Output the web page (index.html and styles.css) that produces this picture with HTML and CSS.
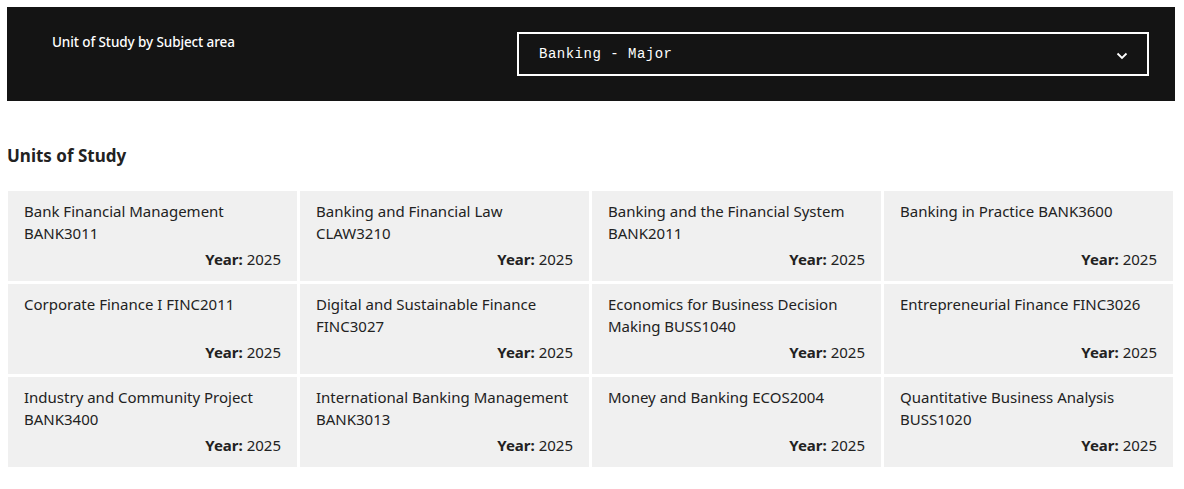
FILE: index.html
```html
<!DOCTYPE html>
<html lang="en">
  <head>
    <meta charset="UTF-8" />
    <meta name="viewport" content="width=device-width, initial-scale=1.0" />
    <title>Units of Study</title>
    <link rel="stylesheet" href="styles.css">
  </head>
  <body>
    <div class="filter-bar">
      <label class="filter-label" for="subject">Unit of Study by Subject area</label>
      <div class="select-box" id="subject">
        <span>Banking - Major</span>
        <svg class="chevron" width="12" height="8" viewBox="0 0 12 8">
          <path d="M1.5 1.5 L6 6 L10.5 1.5" fill="none" stroke="#fff" stroke-width="1.8" />
        </svg>
      </div>
    </div>

    <h2 class="section-title">Units of Study</h2>

    <div class="units">
      <div class="unit">
        <div class="unit-name">Bank Financial Management BANK3011</div>
        <div class="unit-year"><b>Year:</b> 2025</div>
      </div>
      <div class="unit">
        <div class="unit-name">Banking and Financial Law CLAW3210</div>
        <div class="unit-year"><b>Year:</b> 2025</div>
      </div>
      <div class="unit">
        <div class="unit-name">Banking and the Financial System BANK2011</div>
        <div class="unit-year"><b>Year:</b> 2025</div>
      </div>
      <div class="unit">
        <div class="unit-name">Banking in Practice BANK3600</div>
        <div class="unit-year"><b>Year:</b> 2025</div>
      </div>
      <div class="unit">
        <div class="unit-name">Corporate Finance I FINC2011</div>
        <div class="unit-year"><b>Year:</b> 2025</div>
      </div>
      <div class="unit">
        <div class="unit-name">Digital and Sustainable Finance FINC3027</div>
        <div class="unit-year"><b>Year:</b> 2025</div>
      </div>
      <div class="unit">
        <div class="unit-name">Economics for Business Decision Making BUSS1040</div>
        <div class="unit-year"><b>Year:</b> 2025</div>
      </div>
      <div class="unit">
        <div class="unit-name">Entrepreneurial Finance FINC3026</div>
        <div class="unit-year"><b>Year:</b> 2025</div>
      </div>
      <div class="unit">
        <div class="unit-name">Industry and Community Project BANK3400</div>
        <div class="unit-year"><b>Year:</b> 2025</div>
      </div>
      <div class="unit">
        <div class="unit-name">International Banking Management BANK3013</div>
        <div class="unit-year"><b>Year:</b> 2025</div>
      </div>
      <div class="unit">
        <div class="unit-name">Money and Banking ECOS2004</div>
        <div class="unit-year"><b>Year:</b> 2025</div>
      </div>
      <div class="unit">
        <div class="unit-name">Quantitative Business Analysis BUSS1020</div>
        <div class="unit-year"><b>Year:</b> 2025</div>
      </div>
    </div>
  </body>
</html>
```

FILE: styles.css
```css
body {
  font-family: "Noto Sans", Arial, sans-serif;
  margin: 0;
  padding: 7px 9px 7px 7px;
  background-color: #fff;
  color: #222;
}
.filter-bar {
  background-color: #141414;
  height: 94px;
  box-sizing: border-box;
  padding: 25px 26px 0 45px;
  display: flex;
  justify-content: space-between;
  align-items: flex-start;
}
.filter-label {
  color: #fff;
  font-size: 13.5px;
  font-weight: 500;
  margin-top: 1px;
  letter-spacing: -0.1px;
}
.select-box {
  width: 632px;
  height: 44px;
  box-sizing: border-box;
  border: 2px solid #fff;
  display: flex;
  align-items: center;
  justify-content: space-between;
  padding: 0 19px 0 20px;
  color: #fff;
  font-family: "Liberation Mono", monospace;
  font-size: 14px;
  letter-spacing: 0.5px;
}
.chevron {
  margin-top: 4px;
}
.section-title {
  font-size: 17px;
  font-weight: 700;
  margin: 44px 0 24px 0;
  line-height: 22px;
}
.units {
  display: grid;
  grid-template-columns: repeat(4, 289px);
  grid-auto-rows: 90px;
  gap: 3px;
  margin-left: 1px;
}
.unit {
  background-color: #f0f0f0;
  padding: 9px 16px 11px 16px;
  display: flex;
  flex-direction: column;
  font-size: 15px;
  line-height: 22px;
}
.unit-year {
  margin-top: auto;
  text-align: right;
}
.unit-year b {
  font-weight: 700;
}
```
